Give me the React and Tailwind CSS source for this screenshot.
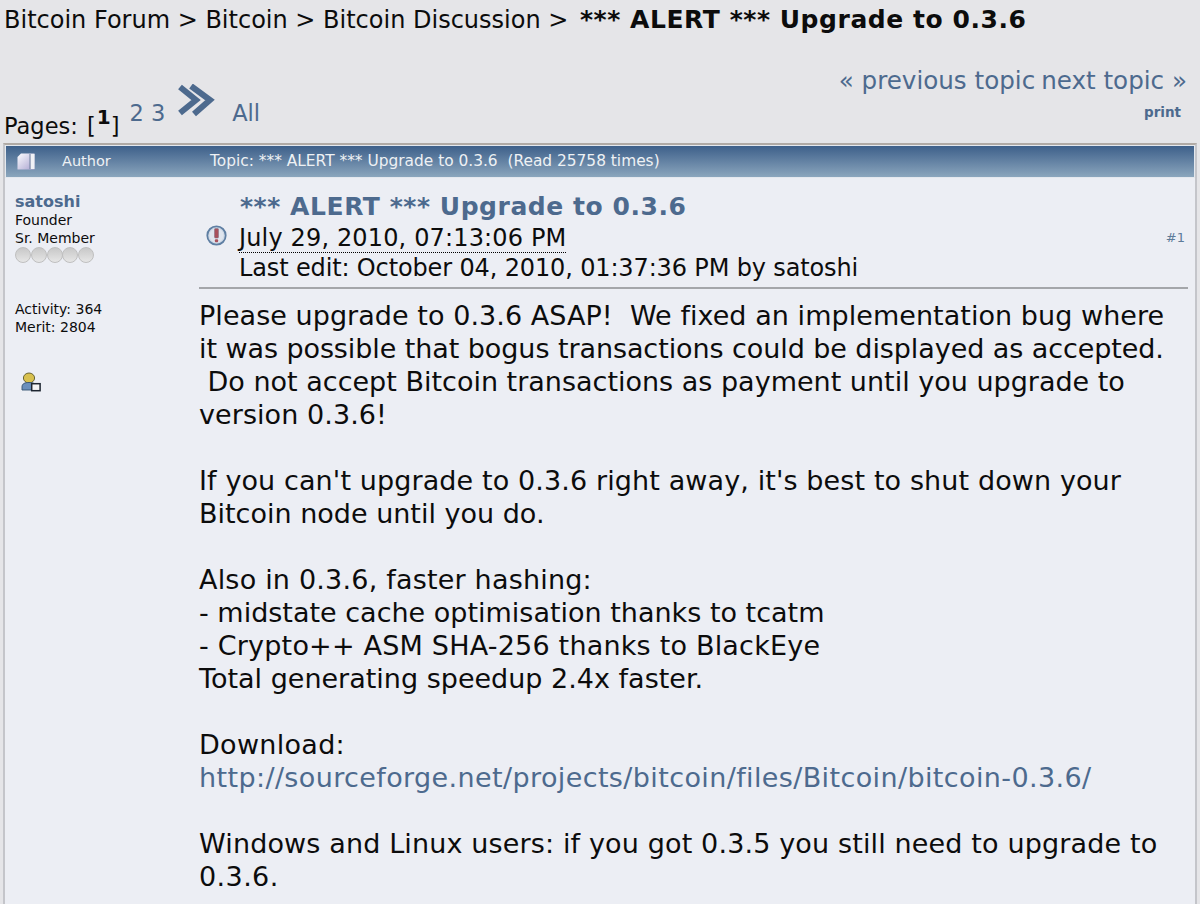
const font = { fontFamily: '"DejaVu Sans", Verdana, sans-serif' };

const lines = [
  { text: "Please upgrade to 0.3.6 ASAP!  We fixed an implementation bug where", cls: "tracking-[0.05px]" },
  { text: "it was possible that bogus transactions could be displayed as accepted.", cls: "tracking-[-0.08px]" },
  { text: " Do not accept Bitcoin transactions as payment until you upgrade to", cls: "" },
  { text: "version 0.3.6!", cls: "tracking-[0.07px]" },
  { text: " ", cls: "" },
  { text: "If you can't upgrade to 0.3.6 right away, it's best to shut down your", cls: "tracking-[0.11px]" },
  { text: "Bitcoin node until you do.", cls: "" },
  { text: " ", cls: "" },
  { text: "Also in 0.3.6, faster hashing:", cls: "tracking-[0.2px]" },
  { text: "- midstate cache optimisation thanks to tcatm", cls: "" },
  { text: "- Crypto++ ASM SHA-256 thanks to BlackEye", cls: "tracking-[0.2px]" },
  { text: "Total generating speedup 2.4x faster.", cls: "" },
  { text: " ", cls: "" },
  { text: "Download:", cls: "tracking-[0.3px]" },
  { text: "http://sourceforge.net/projects/bitcoin/files/Bitcoin/bitcoin-0.3.6/", cls: "tracking-[0.38px] text-[#4d6a8e]" },
  { text: " ", cls: "" },
  { text: "Windows and Linux users: if you got 0.3.5 you still need to upgrade to", cls: "tracking-[0.14px]" },
  { text: "0.3.6.", cls: "tracking-[0.4px]" },
];

function DoubleArrow() {
  return (
    <svg width="38" height="34" viewBox="0 0 38 34" className="ml-[13px] mb-[9px]" fill="none" stroke="#4d6a8e" strokeWidth="6">
      <path d="M2 3 L18 16 L2 29" />
      <path d="M13 2 L32 16 L16 30" />
    </svg>
  );
}

function PageIcon() {
  return (
    <svg width="18" height="17" viewBox="0 0 18 17">
      <defs>
        <linearGradient id="pg" x1="0" y1="0" x2="1" y2="1">
          <stop offset="0" stopColor="#fdfdff" />
          <stop offset="1" stopColor="#a9a2cf" />
        </linearGradient>
      </defs>
      <path d="M4 0.5 H17.5 V16.5 H0.5 V4 Z" fill="url(#pg)" />
      <rect x="12.5" y="1" width="1.2" height="15" fill="#6d7f9c" />
      <rect x="13.7" y="1" width="3.8" height="15" fill="#f1f2f6" />
    </svg>
  );
}

function AlertIcon() {
  return (
    <svg width="21" height="21" viewBox="0 0 21 21">
      <circle cx="10.5" cy="10.5" r="9.2" fill="#cfd9e6" stroke="#5f7fa3" strokeWidth="1.8" />
      <circle cx="10.5" cy="10.5" r="7" fill="#dfe5ee" />
      <rect x="8.5" y="3.5" width="4" height="9.5" rx="1" fill="#a8505c" stroke="#7b6f80" strokeWidth="0.5" />
      <rect x="8.9" y="14.2" width="3.2" height="3" rx="1" fill="#a8505c" />
    </svg>
  );
}

function UserIcon() {
  return (
    <svg width="20" height="20" viewBox="0 0 20 20">
      <ellipse cx="8" cy="6" rx="5.6" ry="5" fill="#d8c04e" stroke="#5c5a2a" strokeWidth="0.9" />
      <path d="M1 18 V15 C1 11.5 4 10.5 8 10.5 C12 10.5 15 11.5 15 15 V18 Z" fill="#6a8fbc" stroke="#33506f" strokeWidth="0.9" />
      <rect x="10.7" y="11.7" width="8.4" height="7" fill="#f4f4f4" stroke="#1d2530" strokeWidth="1.5" />
    </svg>
  );
}

function Star() {
  return <span className="w-[16px] h-[16px] rounded-full bg-gradient-to-b from-[#c8c8c8] to-[#e6e6e6] border border-[#bfbfbf] -mr-[0.25px] shrink-0" />;
}

export default function App() {
  return (
    <div style={font} className="w-[1200px] h-[904px] overflow-hidden bg-[#e5e5e8] text-[#0c0c0c]">
      <div className="pl-[4px] pt-[4px] h-[40px] text-[24px] leading-[32px] whitespace-pre">
        Bitcoin Forum &gt; Bitcoin &gt; Bitcoin Discussion &gt; <b className="ml-[4px] text-[25px] tracking-[0.55px]">*** ALERT *** Upgrade to 0.3.6</b>
      </div>

      <div className="h-[103px] flex justify-between pl-[4px] pr-[13px]">
        <div className="flex items-end h-[100px] text-[22.5px] leading-[28px]">
          <span className="whitespace-pre">Pages: <span className="ml-[2px]">[</span></span>
          <b className="mb-[11px] ml-[1px] text-[20px] leading-[24px]">1</b>
          <span>]</span>
          <div className="flex items-end text-[#4d6a8e] ml-[10px] mb-[13px] whitespace-pre">
            <span>2 3</span>
            <DoubleArrow />
            <span className="ml-[16px]">All</span>
          </div>
        </div>
        <div className="flex flex-col items-end pt-[25px]">
          <div className="text-[#4d6a8e] text-[24.6px] leading-[32px] whitespace-pre">
            « previous topic<span className="ml-[6px]">next topic »</span>
          </div>
          <b className="text-[#4d6a8e] text-[13.5px] leading-[18px] mr-[6px] mt-[6px]">print</b>
        </div>
      </div>

      <div className="mx-[3px] border-x-2 border-[#c4c5ca] bg-[#eceef4] border-t-2 border-t-[#b0aaa5]">
        <div className="h-[33px] flex items-center border border-[#e4e8ee] bg-gradient-to-b from-[#3e608a] to-[#8ba6bd] text-[#eef1f4]">
          <div className="ml-[11px] w-[45px]"><PageIcon /></div>
          <div className="w-[148px] text-[14.5px]">Author</div>
          <div className="whitespace-pre text-[15.4px]">Topic: *** ALERT *** Upgrade to 0.3.6  (Read 25758 times)</div>
        </div>

        <div className="flex h-[800px]">
          <div className="w-[194px] shrink-0 pl-[10px] pt-[14px] text-[14px] leading-[18px]">
            <b className="block text-[#4d6a8e] text-[16px] leading-[20px]">satoshi</b>
            <div className="-mt-[1px]">Founder</div>
            <div>Sr. Member</div>
            <div className="flex"><Star /><Star /><Star /><Star /><Star /></div>
            <div className="mt-[37px]">Activity: 364</div>
            <div>Merit: 2804</div>
            <div className="mt-[36px] ml-[6px]"><UserIcon /></div>
          </div>

          <div className="flex-1 mr-[7px]">
            <div className="flex h-[111px] border-b-2 border-[#a4a6aa]">
              <div className="w-[41px] pl-[7px] pt-[47px] shrink-0"><AlertIcon /></div>
              <div className="flex-1 pt-[13px]">
                <b className="block text-[#4d6a8e] text-[25px] tracking-[0.55px] leading-[32px]">*** ALERT *** Upgrade to 0.3.6</b>
                <div className="-ml-[1px] text-[24px] tracking-[0.15px] leading-[30px]">
                  <span className="border-b border-dotted border-black">July 29, 2010, 07:13:06 PM</span>
                </div>
                <div className="-ml-[1px] text-[24px] tracking-[-0.14px] leading-[30px]">Last edit: October 04, 2010, 01:37:36 PM by satoshi</div>
              </div>
              <div className="pt-[51px] pr-[3px] text-[#5d7b99] text-[13px] leading-[18px]">#1</div>
            </div>
            <div className="pt-[10px] text-[27px] leading-[33px] whitespace-pre">
              {lines.map((line, i) => (
                <div key={i} className={line.cls}>{line.text}</div>
              ))}
            </div>
          </div>
        </div>
      </div>
    </div>
  );
}
